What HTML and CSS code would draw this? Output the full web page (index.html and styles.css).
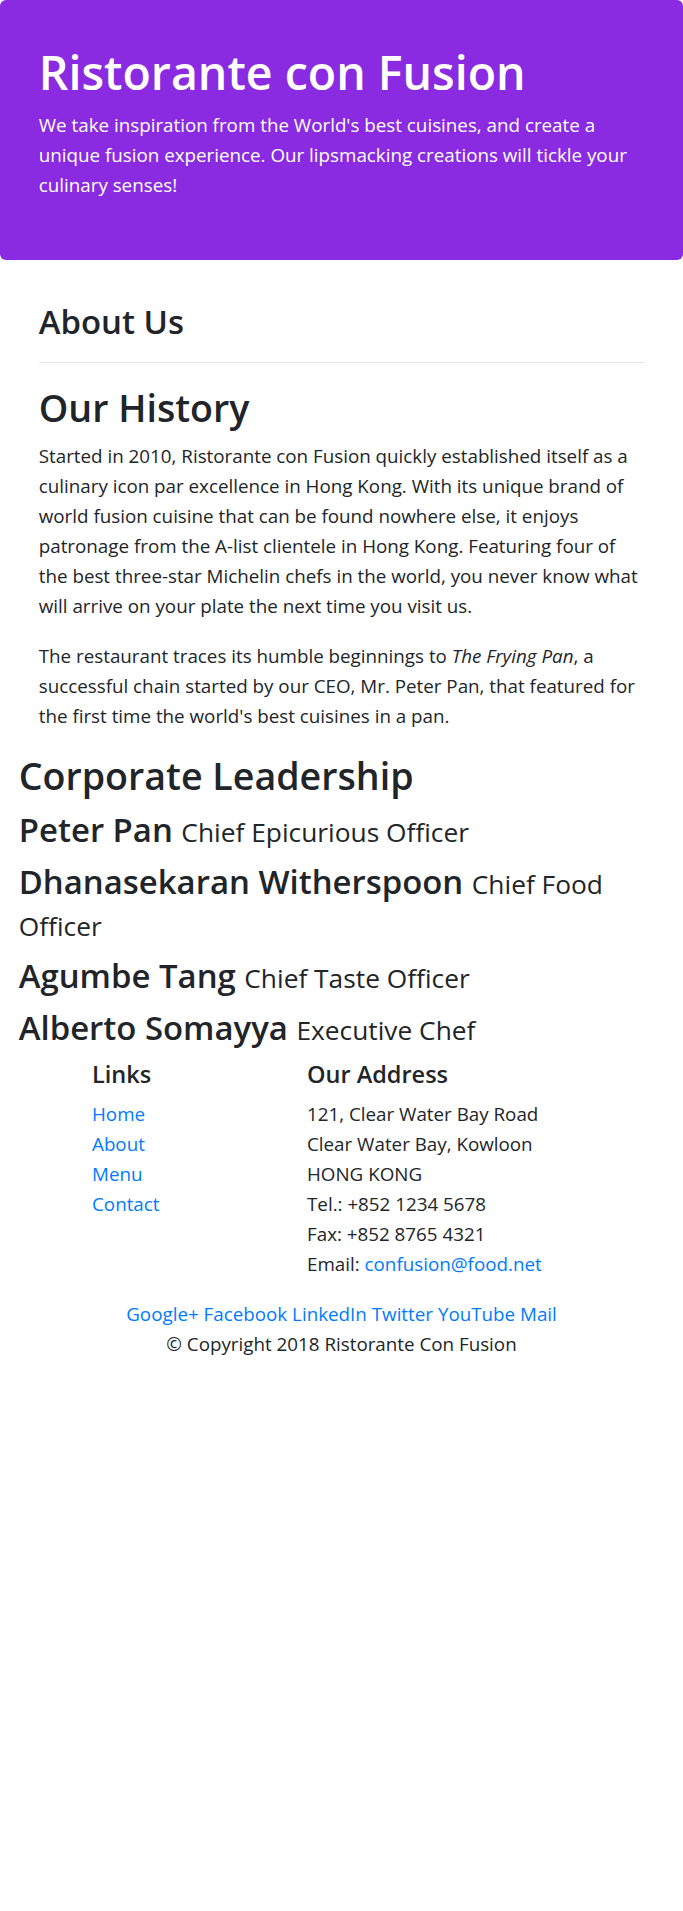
FILE: index.html
```html
<!DOCTYPE html>
<html lang="en">
<head>
<meta charset="utf-8">
<title>Ristorante con Fusion - About Us</title>
<link rel="stylesheet" href="styles.css">
</head>
<body>
<header class="jumbotron">
  <h1 class="brand-title">Ristorante con Fusion</h1>
  <p class="lead-text">We take inspiration from the World's best cuisines, and create a unique fusion experience. Our lipsmacking creations will tickle your culinary senses!</p>
</header>

<main>
  <section class="about">
    <h3 class="page-title">About Us</h3>
    <hr class="divider">
    <h2 class="section-title">Our History</h2>
    <p class="body-text">Started in 2010, Ristorante con Fusion quickly established itself as a culinary icon par excellence in Hong Kong. With its unique brand of world fusion cuisine that can be found nowhere else, it enjoys patronage from the A-list clientele in Hong Kong. Featuring four of the best three-star Michelin chefs in the world, you never know what will arrive on your plate the next time you visit us.</p>
    <p class="body-text">The restaurant traces its humble beginnings to <em>The Frying Pan</em>, a successful chain started by our CEO, Mr. Peter Pan, that featured for the first time the world's best cuisines in a pan.</p>
  </section>

  <section class="leadership">
    <h2 class="section-title">Corporate Leadership</h2>
    <h3 class="leader">Peter Pan <small class="leader-role">Chief Epicurious Officer</small></h3>
    <h3 class="leader">Dhanasekaran Witherspoon <small class="leader-role">Chief Food Officer</small></h3>
    <h3 class="leader">Agumbe Tang <small class="leader-role">Chief Taste Officer</small></h3>
    <h3 class="leader">Alberto Somayya <small class="leader-role">Executive Chef</small></h3>
  </section>
</main>

<footer class="footer">
  <div class="footer-cols">
    <div class="links-col">
      <h5 class="footer-title">Links</h5>
      <ul class="footer-list">
        <li><a class="link" href="#">Home</a></li>
        <li><a class="link" href="#">About</a></li>
        <li><a class="link" href="#">Menu</a></li>
        <li><a class="link" href="#">Contact</a></li>
      </ul>
    </div>
    <div class="address-col">
      <h5 class="footer-title">Our Address</h5>
      <address class="address">
        121, Clear Water Bay Road<br>
        Clear Water Bay, Kowloon<br>
        HONG KONG<br>
        Tel.: +852 1234 5678<br>
        Fax: +852 8765 4321<br>
        Email: <a class="link" href="#">confusion@food.net</a>
      </address>
    </div>
  </div>
  <div class="social">
    <a class="link" href="#">Google+</a>
    <a class="link" href="#">Facebook</a>
    <a class="link" href="#">LinkedIn</a>
    <a class="link" href="#">Twitter</a>
    <a class="link" href="#">YouTube</a>
    <a class="link" href="#">Mail</a>
  </div>
  <p class="copyright">© Copyright 2018 Ristorante Con Fusion</p>
</footer>
</body>
</html>
```

FILE: styles.css
```css
* {
  box-sizing: border-box;
}

body {
  margin: 0;
  font-family: "Open Sans", "Noto Sans", sans-serif;
  font-size: 18.8px;
  line-height: 30px;
  color: #212529;
  background: #ffffff;
}

.jumbotron {
  background: #8a2be2;
  color: #ffffff;
  border-radius: 6px;
  padding: 42px 38.75px 40px;
  margin: 0 0 40px;
}

.brand-title {
  margin: 0 0 8px;
  font-size: 46.5px;
  line-height: 60px;
  font-weight: 600;
}

.lead-text {
  margin: 0 0 20px;
}

.about {
  padding: 0 38.75px;
}

.page-title {
  margin: 0;
  padding-top: 1px;
  font-size: 32.9px;
  line-height: 41px;
  font-weight: 600;
}

.divider {
  margin: 20px 0;
  height: 0;
  border: 0;
  border-top: 1px solid rgba(0, 0, 0, 0.1);
}

.section-title {
  margin: 0 0 10px;
  padding-top: 2px;
  font-size: 37.6px;
  line-height: 46px;
  font-weight: 600;
}

.body-text {
  margin: 0 0 20px;
}

.leadership {
  padding: 0 18.75px;
}

.leader {
  margin: 0 0 10px;
  font-size: 32.9px;
  line-height: 42px;
  font-weight: 600;
}

.leader-role {
  font-size: 80%;
  line-height: 1;
  font-weight: 400;
}

.footer-cols {
  display: grid;
  grid-template-columns: 215px 1fr;
  padding-left: 92px;
}

.footer-title {
  margin: 0 0 10px;
  font-size: 23.5px;
  line-height: 30px;
  font-weight: 600;
}

.footer-list {
  list-style: none;
  margin: 0;
  padding: 0;
}

.address {
  font-style: normal;
  margin: 0 0 20px;
}

.link {
  color: #007bff;
  text-decoration: none;
}

.social {
  text-align: center;
}

.copyright {
  text-align: center;
  margin: 0 0 20px;
}
```
